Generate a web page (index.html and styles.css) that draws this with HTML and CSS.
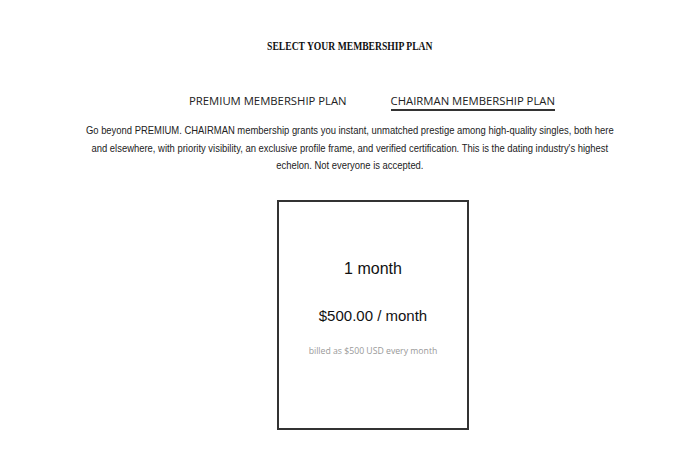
FILE: index.html
```html
<!DOCTYPE html>
<html lang="en">
<head>
  <meta charset="UTF-8" />
  <title>Select your membership plan</title>
  <link rel="stylesheet" href="styles.css">
</head>
<body>

<div class="container">
  <h1>SELECT YOUR MEMBERSHIP PLAN</h1>

  <div class="tabs">
    <span class="tab">PREMIUM MEMBERSHIP PLAN</span>
    <span class="tab active">CHAIRMAN MEMBERSHIP PLAN</span>
  </div>

  <p class="intro">Go beyond PREMIUM. CHAIRMAN membership grants you instant, unmatched prestige among high-quality singles, both here<br>
    and elsewhere, with priority visibility, an exclusive profile frame, and verified certification. This is the dating industry's highest<br>
    echelon. Not everyone is accepted.</p>

  <div class="plan-card">
    <div class="plan-term">1 month</div>
    <div class="plan-price">$500.00 / month</div>
    <div class="plan-billing">billed as $500 USD every month</div>
  </div>
</div>

</body>
</html>
```

FILE: styles.css
```css
* {
  margin: 0;
  padding: 0;
  box-sizing: border-box;
}

body {
  background: #fff;
  color: #111;
  font-family: "Liberation Sans", Arial, sans-serif;
}

.container {
  display: flex;
  flex-direction: column;
  align-items: center;
  padding-top: 38px;
}

h1 {
  font-family: "Liberation Serif", "Times New Roman", serif;
  font-size: 13px;
  font-weight: bold;
  color: #111;
  transform: scaleX(0.74);
}

.tabs {
  display: flex;
  gap: 44px;
  margin-top: 39px;
  padding-left: 44px;
}

.tab {
  font-family: "Open Sans", sans-serif;
  font-size: 11.3px;
  color: #222;
  padding-bottom: 1px;
  border-bottom: 2px solid transparent;
}

.tab.active {
  border-bottom-color: #333;
}

.intro {
  margin-top: 11px;
  white-space: nowrap;
  font-size: 11.5px;
  line-height: 17.5px;
  text-align: center;
  color: #222;
  transform: scaleX(0.82);
}

.plan-card {
  margin-top: 25px;
  margin-left: 46px;
  width: 192px;
  height: 230px;
  border: 2px solid #333;
  display: flex;
  flex-direction: column;
  align-items: center;
  padding-top: 58px;
}

.plan-term {
  font-size: 16px;
  color: #111;
}

.plan-price {
  margin-top: 29px;
  font-size: 15px;
  color: #111;
}

.plan-billing {
  margin-top: 21px;
  font-family: "Open Sans", sans-serif;
  font-size: 8.7px;
  color: #999;
}
```
